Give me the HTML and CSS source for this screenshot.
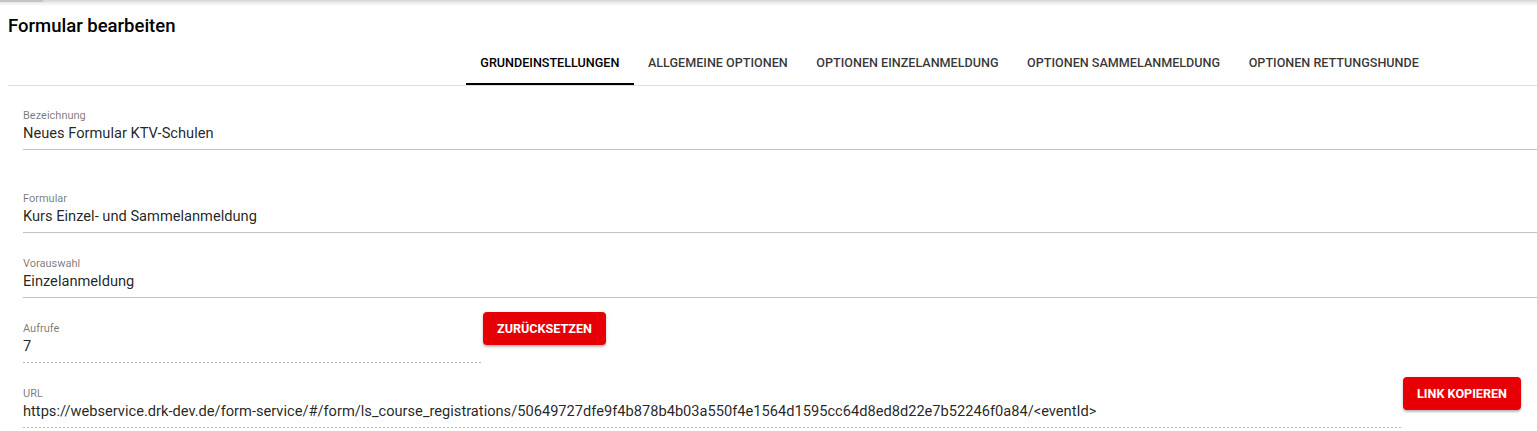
FILE: index.html
```html
<!DOCTYPE html>
<html lang="de">
<head>
<meta charset="utf-8">
<title>Formular bearbeiten</title>
<link rel="stylesheet" href="styles.css">
</head>
<body>
<div class="appbar-shadow"><span class="appbar-seg"></span></div>
<h1 class="title">Formular bearbeiten</h1>
<nav class="tabs">
  <div class="tab tab-active">Grundeinstellungen</div>
  <div class="tab">Allgemeine Optionen</div>
  <div class="tab">Optionen Einzelanmeldung</div>
  <div class="tab">Optionen Sammelanmeldung</div>
  <div class="tab">Optionen Rettungshunde</div>
</nav>
<main class="form">
  <div class="field field-first">
    <div class="label">Bezeichnung</div>
    <div class="value">Neues Formular KTV-Schulen</div>
  </div>
  <div class="field">
    <div class="label">Formular</div>
    <div class="value">Kurs Einzel- und Sammelanmeldung</div>
  </div>
  <div class="field">
    <div class="label">Vorauswahl</div>
    <div class="value">Einzelanmeldung</div>
  </div>
  <div class="row">
    <div class="field field-disabled field-narrow">
      <div class="label">Aufrufe</div>
      <div class="value">7</div>
    </div>
    <button class="btn">Zurücksetzen</button>
  </div>
  <div class="row row-url">
    <div class="field field-disabled field-grow">
      <div class="label">URL</div>
      <div class="value">https://webservice.drk-dev.de/form-service/#/form/ls_course_registrations/50649727dfe9f4b878b4b03a550f4e1564d1595cc64d8ed8d22e7b52246f0a84/&lt;eventId&gt;</div>
    </div>
    <button class="btn">Link kopieren</button>
  </div>
</main>
</body>
</html>
```

FILE: styles.css
```css
* { box-sizing: border-box; }
html, body { margin: 0; padding: 0; background: #fff; }
body {
  font-family: Roboto, "Liberation Sans", Arial, sans-serif;
  color: rgba(0, 0, 0, 0.87);
  overflow: hidden;
}
.appbar-shadow {
  height: 6px;
  background: linear-gradient(to bottom, #d4d4d4 0%, #ececec 45%, #ffffff 100%);
  display: flex;
}
.appbar-seg {
  width: 43px;
  height: 2px;
  background: #c4c4c4;
}
.title {
  margin: 8px 0 0 8px;
  font-size: 18.5px;
  line-height: 24px;
  font-weight: 500;
  color: #000;
}
.tabs {
  margin-left: 8px;
  height: 48px;
  border-bottom: 1px solid #e0e0e0;
  display: flex;
  padding-left: 458px;
}
.tab {
  height: 47px;
  padding: 2px 14.3px 0;
  display: flex;
  align-items: center;
  font-size: 12.6px;
  font-weight: 500;
  text-transform: uppercase;
  color: rgba(0, 0, 0, 0.8);
  white-space: nowrap;
}
.tab-active {
  color: #000;
  box-shadow: inset 0 -2px 0 #000;
}
.form {
  padding-left: 23px;
}
.field {
  padding-top: 24px;
  padding-bottom: 7px;
  border-bottom: 1px solid #c2c2c2;
}
.field-first {
  padding-top: 23px;
  margin-bottom: 18px;
}
.label {
  font-size: 11px;
  line-height: 14px;
  color: rgba(0, 0, 0, 0.54);
  margin-bottom: 1px;
}
.value {
  font-size: 14.65px;
  line-height: 18px;
  color: rgba(0, 0, 0, 0.87);
  white-space: nowrap;
}
.field-disabled {
  border-bottom: none;
  padding-bottom: 8px;
  background-image: linear-gradient(to right, #b8b8b8 0%, #b8b8b8 50%, transparent 50%);
  background-size: 4px 1px;
  background-repeat: repeat-x;
  background-position: left bottom;
}
.row {
  display: flex;
  align-items: flex-start;
}
.row-url {
  padding-right: 16px;
}
.field-narrow { width: 460px; }
.field-grow { flex: 1; }
.btn {
  margin-top: 14px;
  height: 33px;
  padding: 0 14px;
  border: none;
  border-radius: 4px;
  background: #e60005;
  color: #fff;
  font-family: Roboto, "Liberation Sans", Arial, sans-serif;
  font-size: 12.6px;
  font-weight: 700;
  text-transform: uppercase;
  box-shadow: 0 2px 2px rgba(0, 0, 0, 0.2), 0 1px 4px rgba(0, 0, 0, 0.12);
  white-space: nowrap;
}
```
